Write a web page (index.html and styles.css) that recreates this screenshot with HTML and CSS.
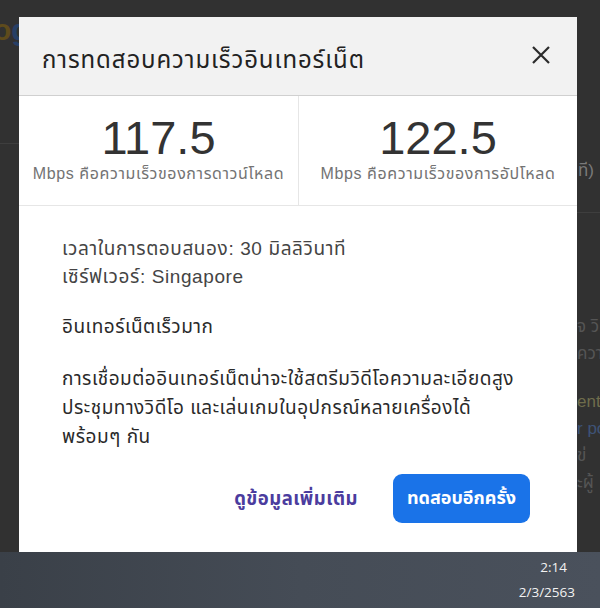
FILE: index.html
```html
<!DOCTYPE html>
<html lang="th">
<head>
<meta charset="utf-8">
<title>การทดสอบความเร็วอินเทอร์เน็ต</title>
<link rel="stylesheet" href="styles.css">
</head>
<body>
<div class="screen">
  <div class="gutter gutter-left">
    <div class="logo-frag"><span class="lo">o</span><span class="lg">g</span></div>
    <div class="bg-rule"></div>
  </div>

  <div class="dialog" role="dialog" aria-label="การทดสอบความเร็วอินเทอร์เน็ต">
    <div class="dlg-head">
      <h1 class="dlg-title">การทดสอบความเร็วอินเทอร์เน็ต</h1>
      <button class="close" aria-label="ปิด">
        <svg viewBox="0 0 20 20" width="20" height="20"><path d="M2 2 L18 18 M18 2 L2 18" stroke="#2b2b2b" stroke-width="2.2" fill="none"/></svg>
      </button>
    </div>
    <div class="stats">
      <div class="stat">
        <div class="num">117.5</div>
        <div class="lbl">Mbps คือความเร็วของการดาวน์โหลด</div>
      </div>
      <div class="stat">
        <div class="num">122.5</div>
        <div class="lbl">Mbps คือความเร็วของการอัปโหลด</div>
      </div>
    </div>
    <div class="dlg-body">
      <p class="meta">เวลาในการตอบสนอง: 30 มิลลิวินาที<br>เซิร์ฟเวอร์: Singapore</p>
      <p class="verdict">อินเทอร์เน็ตเร็วมาก</p>
      <p class="desc">การเชื่อมต่ออินเทอร์เน็ตน่าจะใช้สตรีมวิดีโอความละเอียดสูง ประชุมทางวิดีโอ และเล่นเกมในอุปกรณ์หลายเครื่องได้พร้อมๆ กัน</p>
      <div class="actions">
        <a class="more" href="#">ดูข้อมูลเพิ่มเติม</a>
        <button class="retry">ทดสอบอีกครั้ง</button>
      </div>
    </div>
  </div>

  <div class="gutter gutter-right">
    <div class="frag f1">ที)</div>
    <div class="bg-rule r1"></div>
    <div class="frag f2">จ วิ</div>
    <div class="frag f3">ความ</div>
    <div class="frag f4 yel">ent</div>
    <div class="frag f5 blu">r po</div>
    <div class="frag f6">ข่</div>
    <div class="frag f7">ะผู้</div>
  </div>
</div>
<div class="taskbar">
  <div class="clock">2:14</div>
  <div class="date">2/3/2563</div>
</div>
</body>
</html>
```
FILE: styles.css
```css
* { box-sizing: border-box; }
html, body { margin: 0; padding: 0; }
body {
  width: 600px;
  height: 608px;
  overflow: hidden;
  display: flex;
  flex-direction: column;
  font-family: "Liberation Sans", "Noto Sans Thai", "Noto Sans", sans-serif;
  background: #323232;
}
.screen {
  height: 552px;
  display: grid;
  grid-template-columns: 19px 558px 23px;
  overflow: hidden;
  background: #313131;
}
.gutter { overflow: hidden; white-space: nowrap; }
.logo-frag {
  margin-top: 12px;
  margin-left: -7px;
  font-size: 30px;
  line-height: 36px;
  font-weight: bold;
}
.lo { color: #5e4b1c; }
.lg { color: #263f66; }
.bg-rule { height: 1px; background: #3e3e3e; margin-top: 95px; }
.gutter-right { padding-top: 160px; }
.frag { font-size: 17px; line-height: 22px; color: #6c6c6c; }
.f1 { margin-left: 1px; color: #7a7a7a; }
.r1 { margin-top: 30px; }
.f2 { margin-top: 103px; color: #555; }
.f3 { margin-top: 5px; color: #555; }
.f4 { margin-top: 26px; }
.f5 { margin-top: 5px; }
.f6 { margin-top: 5px; color: #555; }
.f7 { margin-top: 5px; color: #555; }
.yel { color: #6f6d4c; }
.blu { color: #3e5377; }

.dialog {
  margin-top: 17px;
  background: #fff;
  height: 535px;
  overflow: hidden;
  display: flex;
  flex-direction: column;
}
.dlg-head {
  height: 79px;
  flex: none;
  background: #f2f2f2;
  border-bottom: 1px solid #d0d0d0;
  display: flex;
  align-items: center;
  justify-content: space-between;
  padding: 0 26px 0 23px;
}
.dlg-title {
  margin: 0;
  font-size: 24px;
  letter-spacing: 0.9px;
  font-weight: normal;
  color: #222;
  padding-top: 10px;
}
.close {
  border: 0;
  background: none;
  padding: 0;
  width: 20px;
  height: 20px;
  display: flex;
  margin-top: -2px;
}
.stats {
  display: grid;
  grid-template-columns: 1fr 1fr;
  border-bottom: 1px solid #e6e6e6;
  height: 110px;
  flex: none;
}
.stat {
  display: flex;
  flex-direction: column;
  align-items: center;
  padding-top: 16px;
}
.stat + .stat { border-left: 1px solid #e6e6e6; }
.num {
  font-size: 47px;
  line-height: 52px;
  color: #333;
}
.lbl {
  font-size: 16px;
  letter-spacing: 0.6px;
  line-height: 20px;
  color: #737373;
  white-space: nowrap;
}
.dlg-body {
  padding: 29px 47px 0 43px;
  color: #3a3a3a;
  font-size: 19px;
  letter-spacing: 0.5px;
}
.dlg-body p { margin: 0; }
.meta { line-height: 28px; color: #444; letter-spacing: 0.6px; }
.verdict { margin-top: 22px !important; line-height: 28px; color: #2a2a2a; }
.desc { margin-top: 23px !important; line-height: 29px; color: #2a2a2a; }
.actions {
  margin-top: 23px;
  display: flex;
  justify-content: flex-end;
  align-items: center;
  gap: 35px;
}
.more {
  color: #4b3c9e;
  text-decoration: none;
  font-weight: bold;
  font-size: 18.5px;
  letter-spacing: 0.5px;
}
.retry {
  height: 49px;
  padding: 0 14px;
  border: 0;
  border-radius: 9px;
  background: #1a73e8;
  color: #fff;
  font-family: inherit;
  font-size: 18px;
  font-weight: bold;
}
.taskbar {
  height: 56px;
  background: linear-gradient(90deg, #3a4048 0%, #454c56 50%, #4a515c 100%);
  display: flex;
  flex-direction: column;
  align-items: flex-end;
  justify-content: center;
  padding-right: 25px;
  color: #f2f2f2;
  font-family: "Open Sans", "Liberation Sans", sans-serif;
  font-size: 13.5px;
  line-height: 25px;
}
.clock { padding-right: 8px; }
```
